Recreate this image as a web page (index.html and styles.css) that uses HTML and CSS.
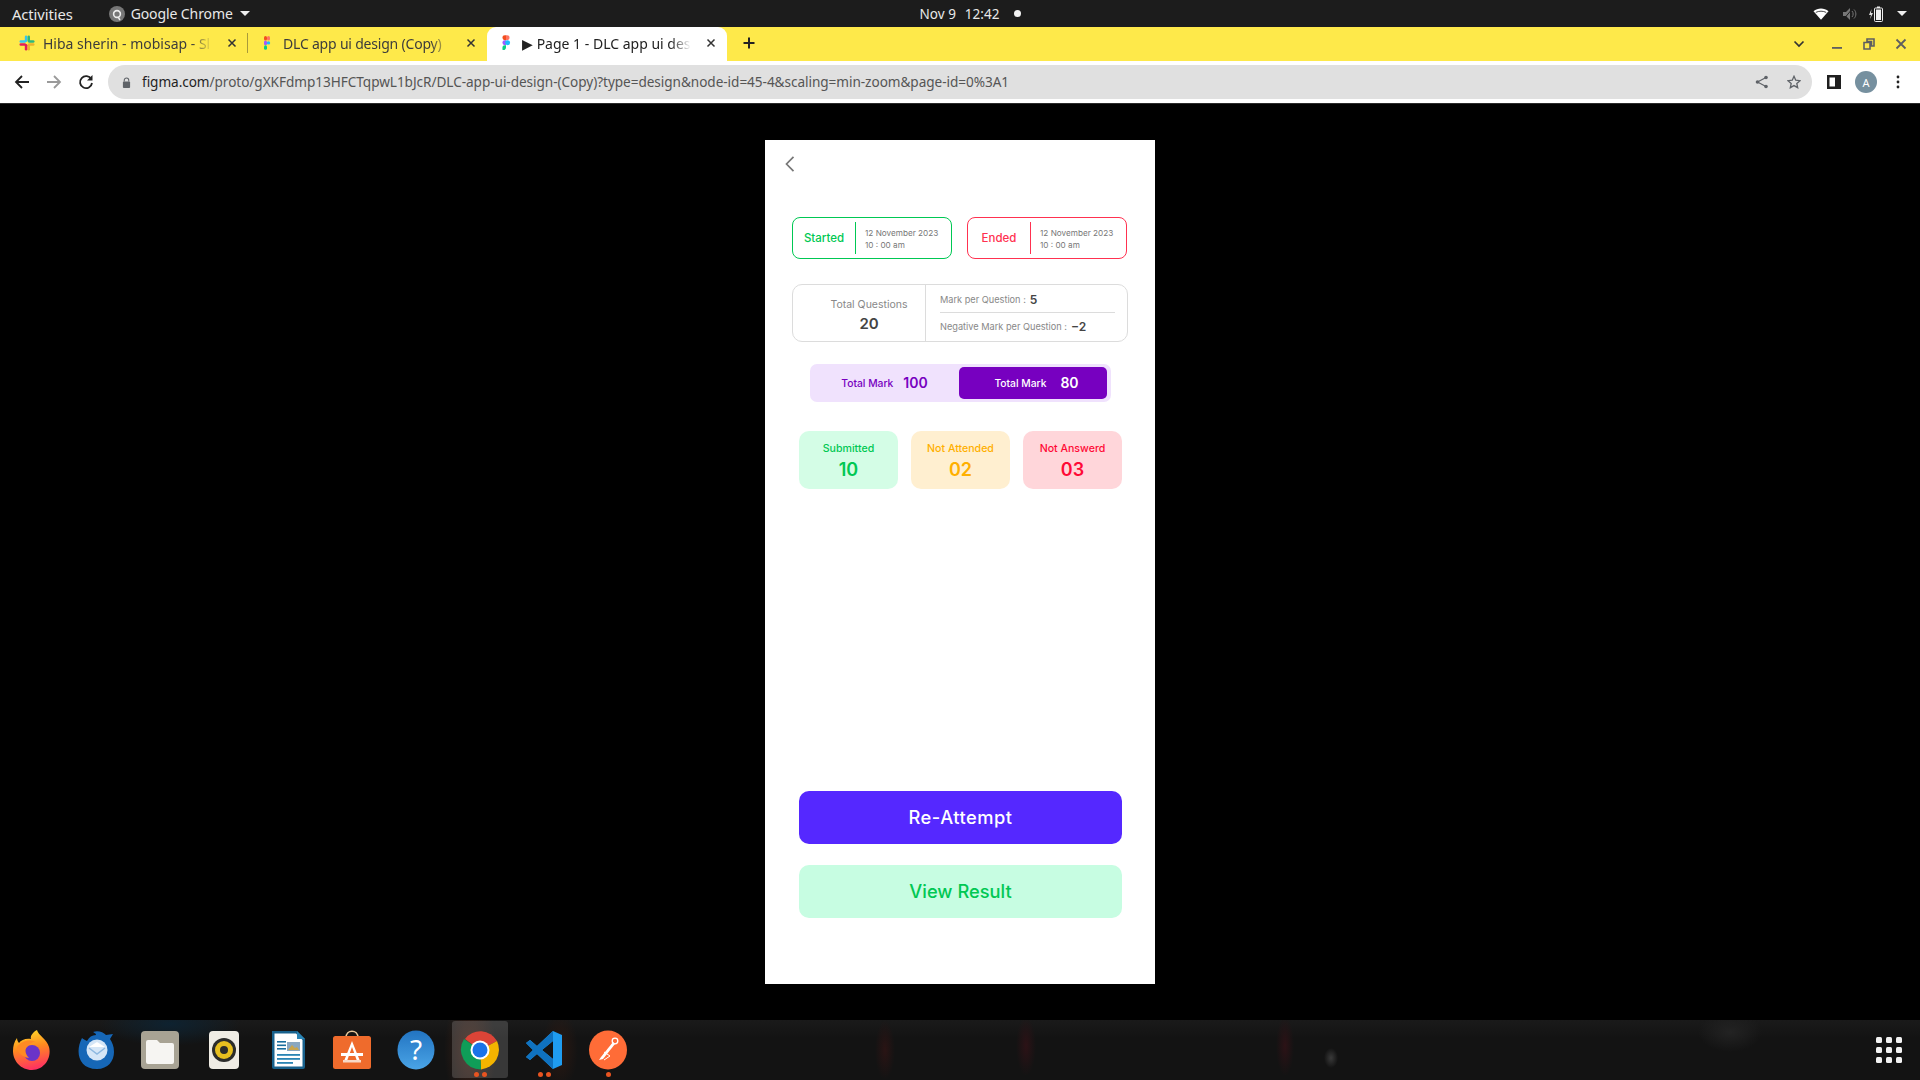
FILE: index.html
```html
<!DOCTYPE html>
<html lang="en">
<head>
<meta charset="utf-8">
<title>Page 1 - DLC app ui design</title>
<link rel="stylesheet" href="styles.css">
</head>
<body>
<div class="screen">
  <header class="topbar">
    <div class="top-left">
      <span class="activities">Activities</span>
      <span class="app-menu">
        <svg class="chrome-mini" viewBox="0 0 16 16"><circle cx="8" cy="8" r="8" fill="#777"/><circle cx="8" cy="8" r="3.4" fill="none" stroke="#eee" stroke-width="1.6"/><path d="M9 11l2 3" stroke="#eee" stroke-width="1.4"/></svg>
        Google Chrome
        <i class="caret"></i>
      </span>
    </div>
    <div class="clock"><span>Nov 9</span><span>12:42</span><i class="dot"></i></div>
    <div class="top-right">
      <svg class="tray wifi" viewBox="0 0 16 12"><path d="M0.5 3.2C4.8-.5 11.2-.5 15.500 3.200L8 11.800z" fill="#fff"/><path d="M2.800 4.400c3.200-1.600 7.200-1.600 10.400 0" stroke="#1c1c1c" fill="none" stroke-width=".8"/></svg>
      <svg class="tray vol" viewBox="0 0 16 14"><path d="M1 5h3l4-4v12l-4-4H1z" fill="#777"/><path d="M10 4c1.500 1.500 1.500 4.500 0 6M12 2.500c2.500 2.500 2.500 6.500 0 9" stroke="#777" fill="none"/><path d="M1 13L11 1" stroke="#1c1c1c" stroke-width="1"/></svg>
      <svg class="tray batt" viewBox="0 0 16 16"><path d="M3.500 3L1 9h2l-1 4 3-6H3z" fill="#ddd"/><rect x="6.500" y="2" width="8" height="13.500" rx="1" fill="none" stroke="#eee"/><rect x="9" y="0.500" width="3" height="1.500" fill="#eee"/><rect x="8" y="3.500" width="5" height="10.500" fill="#eee"/></svg>
      <i class="caret"></i>
    </div>
  </header>

  <nav class="tabstrip">
    <div class="tab tab-slack">
      <svg class="favicon" viewBox="0 0 16 16">
        <rect x="5.800" y="0.500" width="2.500" height="6.500" rx="1.250" fill="#36c5f0"/><rect x="0.500" y="5.300" width="6.500" height="2.500" rx="1.250" fill="#36c5f0"/>
        <rect x="8.500" y="0.500" width="2.500" height="6.500" rx="1.250" fill="#2eb67d"/><rect x="9" y="5.300" width="6.500" height="2.500" rx="1.250" fill="#2eb67d"/>
        <rect x="8.500" y="9" width="2.500" height="6.500" rx="1.250" fill="#ecb22e"/><rect x="9" y="8.300" width="6.500" height="2.500" rx="1.250" fill="#ecb22e"/>
        <rect x="5.800" y="9" width="2.500" height="6.500" rx="1.250" fill="#e01e5a"/><rect x="0.500" y="8.300" width="6.500" height="2.500" rx="1.250" fill="#e01e5a"/>
      </svg>
      <span class="tab-title">Hiba sherin - mobisap - Sl</span>
      <svg class="tab-x" viewBox="0 0 10 10"><path d="M1.500 1.500l7 7M8.500 1.500l-7 7"/></svg>
    </div>
    <i class="tab-sep"></i>
    <div class="tab tab-dlc">
      <svg class="favicon favicon-small" viewBox="0 0 12 16">
        <rect x="3" y="1" width="3" height="4.600" rx="1.500" fill="#f24e1e"/><rect x="6" y="1" width="3" height="4.600" rx="1.500" fill="#ff7262"/>
        <rect x="3" y="5.600" width="3" height="4.600" rx="1.500" fill="#a259ff"/><circle cx="7.500" cy="7.900" r="1.700" fill="#1abcfe"/>
        <rect x="3" y="10.200" width="3" height="4.600" rx="1.500" fill="#0acf83"/>
      </svg>
      <span class="tab-title">DLC app ui design (Copy)</span>
      <svg class="tab-x" viewBox="0 0 10 10"><path d="M1.500 1.500l7 7M8.500 1.500l-7 7"/></svg>
    </div>
    <div class="tab tab-active">
      <svg class="favicon" viewBox="0 0 12 18">
        <path d="M2 3a2.800 2.800 0 0 1 2.800-2.800H6v5.600H4.800A2.800 2.800 0 0 1 2 3z" fill="#f24e1e"/><path d="M6 .2h1.200a2.800 2.800 0 0 1 0 5.600H6z" fill="#ff7262"/>
        <path d="M2 8.600a2.800 2.800 0 0 1 2.800-2.800H6v5.600H4.800A2.800 2.800 0 0 1 2 8.600z" fill="#a259ff"/><circle cx="7.800" cy="8.600" r="2.800" fill="#1abcfe"/>
        <path d="M2 14.200a2.800 2.800 0 0 1 2.800-2.800H6v2.800a2.800 2.800 0 0 1-4 2.500z" fill="#0acf83"/>
      </svg>
      <span class="tab-title">▶ Page 1 - DLC app ui des</span>
      <svg class="tab-x" viewBox="0 0 10 10"><path d="M1.500 1.500l7 7M8.500 1.500l-7 7"/></svg>
    </div>
    <svg class="new-tab" viewBox="0 0 12 12"><path d="M6 0.500v11M0.500 6h11"/></svg>
    <div class="win-controls">
      <svg class="tab-list" viewBox="0 0 12 8"><path d="M1.500 1.500L6 6l4.500-4.500"/></svg>
      <svg class="win-icon" viewBox="0 0 12 12"><rect x="1" y="9" width="10" height="1.800" fill="#5f5f5f"/></svg>
      <svg class="win-icon" viewBox="0 0 12 12"><path d="M4 1h7v7H8.500V3.500H4zM1 4.500h6v6.500H1z" fill="none" stroke="#5f5f5f" stroke-width="1.600"/></svg>
      <svg class="win-icon" viewBox="0 0 12 12"><path d="M1.500 1.500l9 9M10.500 1.500l-9 9" stroke="#5f5f5f" stroke-width="1.800"/></svg>
    </div>
  </nav>

  <div class="toolbar">
    <svg class="tool" viewBox="0 0 16 16"><path d="M15 8H2.500M8 2L2 8l6 6" fill="none" stroke="#222" stroke-width="1.800"/></svg>
    <svg class="tool" viewBox="0 0 16 16"><path d="M1 8h12.500M8 2l6 6-6 6" fill="none" stroke="#9a9a9a" stroke-width="1.800"/></svg>
    <svg class="tool" viewBox="0 0 16 16"><path d="M13.300 5.200A6 6 0 1 0 14 9" fill="none" stroke="#222" stroke-width="1.800"/><path d="M14.500 1v5.500H9z" fill="#222"/></svg>
    <div class="omnibox">
      <svg class="lock" viewBox="0 0 10 12"><path d="M2.500 5V3.500a2.500 2.500 0 0 1 5 0V5" fill="none" stroke="#5f6368" stroke-width="1.200"/><rect x="1" y="5" width="8" height="7" rx="1" fill="#5f6368"/></svg>
      <span class="url"><b>figma.com</b>/proto/gXKFdmp13HFCTqpwL1bJcR/DLC-app-ui-design-(Copy)?type=design&amp;node-id=45-4&amp;scaling=min-zoom&amp;page-id=0%3A1</span>
      <svg class="omni-icon" viewBox="0 0 14 14"><circle cx="11" cy="2.500" r="1.800" fill="#5f6368"/><circle cx="11" cy="11.500" r="1.800" fill="#5f6368"/><circle cx="2.500" cy="7" r="1.800" fill="#5f6368"/><path d="M11 2.500L2.500 7l8.500 4.500" fill="none" stroke="#5f6368" stroke-width="1.200"/></svg>
      <svg class="omni-icon" viewBox="0 0 16 16"><path d="M8 1.500l2 4.500 4.800.5-3.600 3.200 1 4.800L8 12.100l-4.200 2.400 1-4.800L1.200 6.500 6 6z" fill="none" stroke="#5f6368" stroke-width="1.500"/></svg>
    </div>
    <svg class="panel" viewBox="0 0 14 14"><path d="M0 0h14v14H0zM2.500 2.500v9H8v-9z" fill="#1f1f1f" fill-rule="evenodd"/></svg>
    <span class="avatar">A</span>
    <svg class="kebab" viewBox="0 0 4 14"><circle cx="2" cy="2" r="1.400"/><circle cx="2" cy="7" r="1.400"/><circle cx="2" cy="12" r="1.400"/></svg>
  </div>

  <main class="viewport">
    <section class="phone">
      <svg class="back" viewBox="0 0 10 16"><path d="M8.500 0.800L1.500 8l7 7.200"/></svg>

      <div class="dates">
        <div class="date-card date-green">
          <span class="date-label">Started</span>
          <div class="date-text"><span>12 November 2023</span><span>10 : 00 am</span></div>
        </div>
        <div class="date-card date-red">
          <span class="date-label">Ended</span>
          <div class="date-text"><span>12 November 2023</span><span>10 : 00 am</span></div>
        </div>
      </div>

      <div class="stats">
        <div class="stats-left">
          <span class="stats-title">Total Questions</span>
          <strong class="stats-num">20</strong>
        </div>
        <div class="stats-right">
          <div class="stats-row">Mark per Question : <strong>5</strong></div>
          <div class="stats-row">Negative Mark per Question : <strong>−2</strong></div>
        </div>
      </div>

      <div class="marks">
        <div class="mark">Total Mark <strong>100</strong></div>
        <div class="mark mark-on">Total Mark <strong>80</strong></div>
      </div>

      <div class="tiles">
        <div class="tile tile-green"><span>Submitted</span><strong>10</strong></div>
        <div class="tile tile-orange"><span>Not Attended</span><strong>02</strong></div>
        <div class="tile tile-red"><span>Not Answerd</span><strong>03</strong></div>
      </div>

      <div class="actions">
        <button class="btn btn-primary">Re-Attempt</button>
        <button class="btn btn-soft">View Result</button>
      </div>
    </section>
  </main>

  <footer class="dock">
    <div class="dock-item">
      <svg viewBox="0 0 40 40"><defs><linearGradient id="ff" x1="0.300" y1="0" x2="0.500" y2="1"><stop offset="0" stop-color="#ffdd2a"/><stop offset=".45" stop-color="#ff8a1f"/><stop offset="1" stop-color="#ff2f63"/></linearGradient></defs><path d="M25 0c1 5 10 9 12 17 3 11-5 23-17 23C9 40 1 31 1 21c0-5 1-9 4-13 0 2 1 4 2 5 2-3 7-5 12-4-1-3 2-7 6-9z" fill="url(#ff)"/><circle cx="20" cy="23" r="8" fill="#6a34c8"/><path d="M5 17c4-6 12-8 19-5-4 0-7 2-9 5-3 3-1 8 2 11-7-1-12-6-12-11z" fill="#ff8a24"/></svg>
    </div>
    <div class="dock-item">
      <svg viewBox="0 0 40 40"><path d="M6 8c-7 13-4 31 15 31 11 0 17-8 17-17 0-6-2-10-4-13l3-5-7 1c-3-3-8-5-13-3 1 1 3 1 3 3-4 0-7 2-9 6-2-1-4-2-5-3z" fill="#1667b7"/><circle cx="21" cy="20" r="10.500" fill="#d5e6f7"/><path d="M13 17l8-5 8 5" fill="#fff"/><path d="M13 18l8 6 8-6" fill="none" stroke="#8db8e0" stroke-width="1.500"/></svg>
    </div>
    <div class="dock-item">
      <svg viewBox="0 0 40 40"><rect x="1" y="1" width="38" height="38" rx="4" fill="#a8a394"/><path d="M6 12a2 2 0 0 1 2-2h9l3 3h12a2 2 0 0 1 2 2v17a2 2 0 0 1-2 2H8a2 2 0 0 1-2-2z" fill="#f6f5f2"/></svg>
    </div>
    <div class="dock-item">
      <svg viewBox="0 0 40 40"><rect x="5" y="1" width="30" height="38" rx="4" fill="#efece4"/><circle cx="20" cy="20" r="12" fill="#2c2c2a"/><circle cx="20" cy="20" r="9" fill="#e8bf1f"/><circle cx="20" cy="20" r="4" fill="#2c2c2a"/></svg>
    </div>
    <div class="dock-item">
      <svg viewBox="0 0 40 40"><path d="M4 1h25l8 8v28a2 2 0 0 1-2 2H6a2 2 0 0 1-2-2z" fill="#18618c"/><path d="M6.500 3.500H28l6.500 6.500v26.500h-28z" fill="#fff"/><path d="M29 1l8 8h-8z" fill="#2a84b4"/><rect x="9" y="11" width="9" height="1.600" fill="#1a6e9e"/><rect x="9" y="14.500" width="9" height="1.600" fill="#1a6e9e"/><rect x="9" y="18" width="9" height="1.600" fill="#1a6e9e"/><rect x="19" y="12" width="13" height="9" fill="#8aa7c0"/><path d="M20 20l4-5 3 3 2-1 2 3z" fill="#c9a54e"/><rect x="9" y="24" width="23" height="1.800" fill="#2a84b4"/><rect x="9" y="28" width="23" height="1.800" fill="#2a84b4"/><rect x="9" y="32" width="16" height="1.800" fill="#2a84b4"/></svg>
    </div>
    <div class="dock-item">
      <svg viewBox="0 0 40 40"><path d="M14 8c0-9 12-9 12 0" fill="none" stroke="#e8c79a" stroke-width="1.600"/><rect x="1" y="6" width="38" height="33" rx="2.500" fill="#ef6b2c"/><path d="M20 11l-8 20h3l5-14 5 14h3z" fill="#fff"/><rect x="9" y="23" width="22" height="3" fill="#fff"/><rect x="11" y="30" width="18" height="2.500" fill="#f8d9c6"/></svg>
    </div>
    <div class="dock-item">
      <svg viewBox="0 0 40 40"><defs><linearGradient id="hp" x1="0" y1="0" x2="0" y2="1"><stop offset="0" stop-color="#2274c2"/><stop offset="1" stop-color="#4aa4e6"/></linearGradient></defs><ellipse cx="20" cy="20" rx="18.500" ry="19.500" fill="url(#hp)"/><text x="20" y="30" class="help-q">?</text></svg>
    </div>
    <div class="dock-item dock-active">
      <svg viewBox="0 0 40 40"><path d="M20 20L5 9A19 19 0 0 1 37 11z" fill="#db4437"/><path d="M20 20L37 11A20 20 0 0 1 21 39.500z" fill="#f4b400"/><path d="M20 20L21 39.500A20 20 0 0 1 4 9z" fill="#0f9d58"/><circle cx="20" cy="20" r="9.500" fill="#fff"/><circle cx="20" cy="20" r="7.500" fill="#1a73e8"/></svg>
      <div class="dots"><i></i><i></i></div>
    </div>
    <div class="dock-item">
      <svg viewBox="0 0 40 40"><path d="M29 1l9 4v30l-9 4L13 24l-7 6-4-3 7-7-7-7 4-3 7 6z" fill="#1f9cf0"/><path d="M29 11L18 20l11 9z" fill="#141414"/><path d="M29 1L13 16l-7-6-4 3 7 7-7 7 4 3 7-6 16 15V29L18 20 29 11z" fill="#0f72c0"/></svg>
      <div class="dots"><i></i><i></i></div>
    </div>
    <div class="dock-item">
      <svg viewBox="0 0 40 40"><ellipse cx="20" cy="20" rx="19" ry="19.500" fill="#ff6c37"/><path d="M11 30l4-1 12-15-2-2-12 15z" fill="#fff"/><circle cx="27" cy="11" r="2.800" fill="none" stroke="#fff" stroke-width="1.300"/><path d="M16 22l6 4-6 4" fill="none" stroke="#fff" stroke-width="1"/></svg>
      <div class="dots"><i></i></div>
    </div>
    <div class="apps-grid">
      <i></i><i></i><i></i><i></i><i></i><i></i><i></i><i></i><i></i>
    </div>
  </footer>
</div>
</body>
</html>
```
FILE: styles.css
```css
* { box-sizing: border-box; }
html, body { margin: 0; padding: 0; background: #000; }
body { font-family: "Noto Sans", sans-serif; }

.screen { width: 1920px; height: 1080px; display: flex; flex-direction: column; overflow: hidden; }

/* GNOME top bar */
.topbar { height: 27px; flex: none; background: #1c1c1c; color: #e8e8e8; font-size: 14px; display: grid; grid-template-columns: 1fr auto 1fr; align-items: center; padding: 0 13px 0 12px; }
.top-left { display: flex; align-items: center; gap: 36px; }
.activities { font-size: 14.800px; letter-spacing: -.1px; }
.app-menu { display: flex; align-items: center; gap: 7px; letter-spacing: -.1px; }
.chrome-mini { width: 16px; height: 16px; margin-right: -1px; }
.caret { width: 0; height: 0; border-left: 5px solid transparent; border-right: 5px solid transparent; border-top: 5px solid #eee; display: block; }
.clock { display: flex; align-items: center; gap: 9px; margin-left: 22px; font-size: 13.500px; }
.clock .dot { width: 7px; height: 7px; border-radius: 50%; background: #f2f2f2; margin-left: 6px; }
.top-right { display: flex; align-items: center; justify-content: flex-end; }
.tray { display: block; }
.wifi { width: 16px; height: 12px; margin-right: 13px; }
.vol { width: 16px; height: 14px; margin-right: 10px; }
.batt { width: 16px; height: 16px; margin-right: 13px; }

/* Tab strip */
.tabstrip { height: 34px; flex: none; background: #fee94a; display: flex; align-items: center; color: #3c3c3c; font-size: 14px; }
.tab { height: 34px; display: flex; align-items: center; flex: none; padding-bottom: 2px; }
.tab-slack { width: 247px; padding-left: 19px; padding-right: 10px; }
.tab-dlc { width: 238px; padding-left: 13px; padding-right: 10px; }
.tab-active { width: 240px; margin-left: 1px; padding-left: 11px; padding-right: 11px; background: #fff; border-radius: 9px 9px 0 0; color: #222; }
.favicon { width: 16px; height: 16px; flex: none; margin-right: 8px; }
.favicon-small { width: 12px; margin-right: 10px; }
.tab-title { flex: 1; min-width: 0; white-space: nowrap; -webkit-mask-image: linear-gradient(90deg, #000 88%, transparent 100%); mask-image: linear-gradient(90deg, #000 88%, transparent 100%); }
.tab-dlc .tab-title { letter-spacing: -.2px; }
.tab-x { width: 10px; height: 10px; flex: none; margin-left: 15px; fill: none; stroke: #333; stroke-width: 1.500; }
.tab-sep { width: 1px; height: 20px; background: #a89a3a; flex: none; margin-right: 0; margin-top: -2px; }
.new-tab { width: 12px; height: 12px; margin-left: 16px; fill: none; stroke: #222; stroke-width: 2; flex: none; margin-top: -2px; }
.win-controls { margin-left: auto; display: flex; align-items: center; padding-right: 13px; }
.tab-list { width: 12px; height: 8px; fill: none; stroke: #333; stroke-width: 1.700; margin-right: 6px; }
.win-icon { width: 12px; height: 12px; margin-left: 20px; }

/* Browser toolbar */
.toolbar { height: 43px; flex: none; background: #fff; border-bottom: 1px solid #2b2b2b; display: flex; align-items: center; padding: 0 0 0 14px; }
.tool { width: 16px; height: 16px; margin-right: 16px; flex: none; }
.omnibox { width: 1704px; height: 34px; margin-left: -2px; background: #e0e0e0; border-radius: 17px; display: flex; align-items: center; padding: 0 11px 0 14px; font-size: 13.600px; color: #555; flex: none; }
.lock { width: 9px; height: 11px; flex: none; margin-right: 11px; }
.url { flex: 1; white-space: nowrap; letter-spacing: -.05px; padding-bottom: 1px; }
.url b { color: #1f1f1f; font-weight: 400; }
.omni-icon { width: 14px; height: 14px; margin-left: 18px; flex: none; }
.panel { width: 14px; height: 14px; margin-left: 15px; flex: none; }
.avatar { width: 22px; height: 22px; margin-left: 14px; border-radius: 50%; background: #76909f; color: #fff; font-size: 11px; display: flex; align-items: center; justify-content: center; flex: none; }
.kebab { width: 4px; height: 14px; margin-left: 19px; fill: #222; flex: none; }

/* Viewport and phone frame */
.viewport { flex: 1; min-height: 0; background: #000; display: flex; justify-content: center; align-items: flex-start; padding-top: 36px; }
.phone { width: 390px; height: 844px; background: #fff; display: flex; flex-direction: column; padding: 16px 0 66px; font-family: Inter, "Open Sans", sans-serif; }
.back { width: 10px; height: 16px; margin-left: 20px; fill: none; stroke: #777; stroke-width: 1.700; flex: none; }

.dates { display: flex; gap: 15px; margin: 45px 0 0 27px; }
.date-card { width: 160px; height: 42px; border: 1.500px solid; border-radius: 8px; display: flex; align-items: center; }
.date-green { border-color: #00c853; color: #00c853; }
.date-red { border-color: #ff3150; color: #ff3150; }
.date-label { width: 63px; height: 32px; border-right: 1.500px solid currentColor; display: flex; align-items: center; justify-content: center; font-size: 11.500px; font-weight: 500; flex: none; }
.date-text { display: flex; flex-direction: column; padding: 1px 0 0 9px; font-size: 8.200px; line-height: 12px; color: #777; white-space: nowrap; }

.stats { width: 336px; height: 58px; margin: 25px 0 0 27px; border: 1px solid #dcdcdc; border-radius: 10px; display: flex; flex: none; }
.stats-left { width: 133px; flex: none; border-right: 1px solid #dcdcdc; display: flex; flex-direction: column; align-items: center; padding: 12px 0 0 20px; }
.stats-title { font-size: 10.500px; line-height: 15px; color: #888; white-space: nowrap; }
.stats-num { font-size: 15px; line-height: 18px; margin-top: 3px; color: #444; font-weight: 600; }
.stats-right { flex: 1; padding: 0 12px 0 14px; display: flex; flex-direction: column; }
.stats-row { height: 27px; display: flex; align-items: center; gap: 4px; font-size: 9.200px; color: #888; white-space: nowrap; }
.stats-row:first-child { height: 28px; padding-top: 2px; border-bottom: 1px solid #dcdcdc; }
.stats-row strong { font-size: 12px; color: #444; font-weight: 600; }

.marks { width: 301px; height: 38px; margin: 22px 0 0 45px; padding: 3px 4px 3px 0; background: #f0e2fd; border-radius: 7px; display: flex; align-items: center; flex: none; }
.mark { flex: 1; height: 32px; display: flex; align-items: center; justify-content: center; gap: 10px; padding-bottom: 1px; font-size: 10.300px; font-weight: 500; color: #7700c0; white-space: nowrap; }
.mark strong { font-size: 14px; font-weight: 600; }
.mark-on { flex: none; width: 148px; background: #7700c0; color: #fff; border-radius: 5px; gap: 14px; padding-left: 7px; }

.tiles { display: flex; gap: 13px; margin: 29px 0 0 34px; }
.tile { width: 99px; height: 58px; border-radius: 10px; display: flex; flex-direction: column; align-items: center; padding-top: 10px; }
.tile span { font-size: 10.600px; line-height: 15px; font-weight: 500; white-space: nowrap; }
.tile strong { font-size: 18px; line-height: 22px; font-weight: 600; margin-top: 3px; }
.tile-green { background: #d4fde6; color: #00c853; }
.tile-orange { background: #ffefd0; color: #ffb000; }
.tile-red { background: #ffd6da; color: #ff0a36; }

.actions { margin: auto 0 0 34px; display: flex; flex-direction: column; gap: 21px; }
.btn { width: 323px; height: 53px; border: 0; border-radius: 10px; padding: 0 0 2px; font-family: inherit; font-size: 18.300px; font-weight: 500; }
.btn-primary { background: #5528ff; color: #fff; letter-spacing: .5px; }
.btn-soft { background: #c7fde2; color: #00c853; }

/* Dock */
.dock { height: 60px; flex: none; display: flex; position: relative; align-items: flex-start; background:
  radial-gradient(ellipse 26px 60px at 470px 30px, #3a2016 0%, transparent 100%),
  radial-gradient(ellipse 18px 40px at 560px 30px, #2a1812 0%, transparent 100%),
  radial-gradient(ellipse 70px 22px at 170px 4px, #0e2230 0%, transparent 100%),
  radial-gradient(ellipse 10px 30px at 885px 30px, #2a1414 0%, transparent 100%),
  radial-gradient(ellipse 10px 30px at 1026px 26px, #2c1216 0%, transparent 100%),
  radial-gradient(ellipse 9px 30px at 1285px 26px, #2c1216 0%, transparent 100%),
  radial-gradient(ellipse 7px 10px at 1331px 38px, #3a3a3a 0%, transparent 100%),
  radial-gradient(ellipse 32px 20px at 1730px 12px, #232323 0%, transparent 100%),
  linear-gradient(#1a1a1a, #131313 30%); }
.dock-item { width: 64px; height: 60px; flex: none; padding: 10px 12px 0; position: relative; }
.dock-item svg { width: 40px; height: 40px; display: block; }
.dock-active::before { content: ""; position: absolute; left: 4px; right: 4px; top: 1px; bottom: 2px; background: rgba(255, 255, 255, .16); border-radius: 3px; }
.dock-active svg { position: relative; }
.dots { position: absolute; left: 0; right: 0; bottom: 3px; display: flex; justify-content: center; gap: 3px; }
.dots i { width: 5px; height: 5px; border-radius: 50%; background: #e95420; }
.help-q { font: 400 28px "Noto Sans", sans-serif; fill: #fff; text-anchor: middle; }
.apps-grid { margin: 17px 18px 0 auto; width: 26px; height: 26px; display: grid; grid-template-columns: repeat(3, 6px); justify-content: space-between; align-content: space-between; }
.apps-grid i { width: 6px; height: 6px; background: #f2f2f2; border-radius: 1.500px; }
```
